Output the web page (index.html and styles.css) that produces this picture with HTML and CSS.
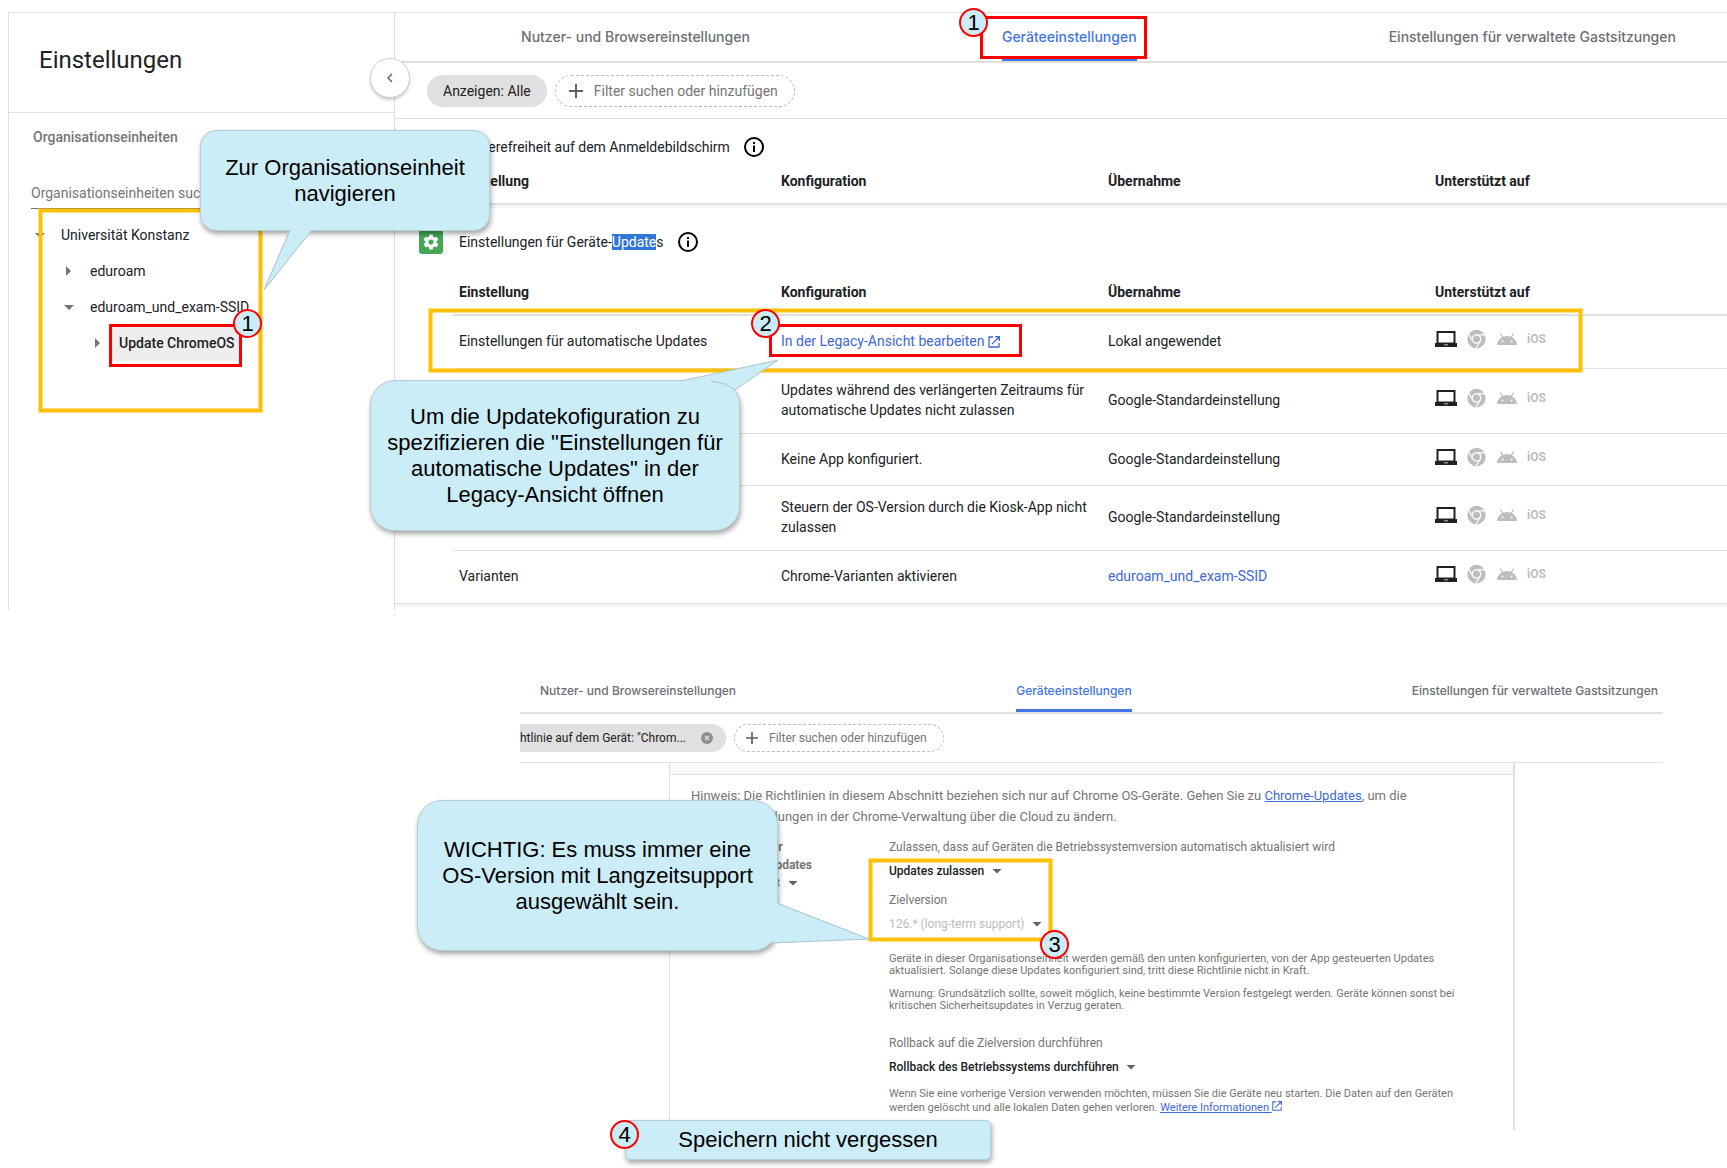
FILE: index.html
```html
<!DOCTYPE html>
<html lang="de">
<head>
<meta charset="utf-8">
<meta name="viewport" content="width=device-width, initial-scale=1">
<title>Einstellungen – Geräteeinstellungen</title>
<link rel="stylesheet" href="styles.css">
</head>
<body>
<svg class="sprite" aria-hidden="true">
  <symbol id="laptop" viewBox="0 0 22 16">
    <path fill="#202124" fill-rule="evenodd" d="M1.500 0h19v12H22v4H0v-4h1.500zM3.500 2v9.500h15V2z"/>
    <path fill="#8a8a8a" d="M9 13h4v1.500H9z"/>
  </symbol>
  <symbol id="chrome" viewBox="0 0 20 20">
    <circle cx="9.500" cy="10" r="9.200" fill="#bdbdbd"/>
    <path d="M9.500 5.800H18M5.800 12.100L1.600 4.900M13.200 12.100L9 19.300" stroke="#fff" stroke-width="1.200"/>
    <circle cx="9.500" cy="10" r="4.200" fill="#bdbdbd" stroke="#fff" stroke-width="1.200"/>
  </symbol>
  <symbol id="android" viewBox="0 0 20 12">
    <path fill="#bdbdbd" d="M0 12a10 9 0 0 1 20 0z"/>
    <path d="M3.300.500L6 4.600M16.700.500L14 4.600" stroke="#bdbdbd" stroke-width="1.300"/>
    <circle cx="5.500" cy="8.500" r="1" fill="#fff"/><circle cx="14.500" cy="8.500" r="1" fill="#fff"/>
  </symbol>
  <symbol id="info" viewBox="0 0 20 20">
    <circle cx="10" cy="10" r="9" fill="none" stroke="#000" stroke-width="2"/>
    <path fill="#000" d="M9 5h2v2H9zM9 8.500h2V15H9z"/>
  </symbol>
  <symbol id="open" viewBox="0 0 12 12">
    <path d="M5 1H1v10h10V7M7 .7h4.300V5M11 1L4 8" fill="none" stroke="currentColor" stroke-width="1.300"/>
  </symbol>
  <symbol id="plus" viewBox="0 0 14 14">
    <path d="M7 0v14M0 7h14" stroke="#5f6368" stroke-width="2"/>
  </symbol>
  <symbol id="gear" viewBox="0 0 24 24">
    <path fill="#fff" d="M19.430 12.980c.04-.32.07-.64.07-.98s-.03-.66-.07-.98l2.110-1.650c.19-.15.24-.42.12-.64l-2-3.460c-.12-.22-.39-.3-.61-.22l-2.490 1c-.52-.4-1.080-.73-1.690-.98l-.38-2.650C14.460 2.180 14.250 2 14 2h-4c-.25 0-.46.18-.49.42l-.38 2.650c-.61.25-1.170.59-1.690.98l-2.490-1c-.23-.09-.49 0-.61.22l-2 3.460c-.13.22-.07.49.12.64l2.110 1.650c-.04.32-.07.65-.07.98s.03.66.07.98l-2.110 1.650c-.19.15-.24.42-.12.64l2 3.460c.12.22.39.3.61.22l2.490-1c.52.4 1.080.73 1.690.98l.38 2.650c.03.24.24.42.49.42h4c.25 0 .46-.18.49-.42l.38-2.650c.61-.25 1.170-.59 1.690-.98l2.490 1c.23.09.49 0 .61-.22l2-3.460c.12-.22.07-.49-.12-.64zM12 15.500c-1.930 0-3.500-1.570-3.500-3.500s1.570-3.500 3.500-3.500 3.500 1.570 3.500 3.500-1.570 3.500-3.500 3.500z"/>
  </symbol>
</svg>

<section class="console">
  <aside class="sidebar">
    <h1 class="sidebar-title">Einstellungen</h1>
    <button class="collapse" aria-label="Seitenleiste einklappen">
      <svg width="6" height="10" viewBox="0 0 6 10"><path d="M5 1L1 5l4 4" fill="none" stroke="#5f6368" stroke-width="1.500"/></svg>
    </button>
    <h2 class="units-title">Organisationseinheiten</h2>
    <input class="unit-search" type="text" placeholder="Organisationseinheiten suchen" aria-label="Organisationseinheiten suchen">
    <ul class="tree">
      <li><button class="node level-1"><i class="arrow down"></i><span>Universität Konstanz</span></button></li>
      <li><button class="node level-2"><i class="arrow right"></i><span>eduroam</span></button></li>
      <li><button class="node level-2"><i class="arrow down"></i><span>eduroam_und_exam-SSID</span></button></li>
      <li><button class="node level-3 selected"><i class="arrow right"></i><span>Update ChromeOS</span></button></li>
    </ul>
  </aside>

  <main class="content">
    <nav class="tabs">
      <a href="#nutzer">Nutzer- und Browsereinstellungen</a>
      <a href="#geraete" class="active">Geräteeinstellungen</a>
      <a href="#gast">Einstellungen für verwaltete Gastsitzungen</a>
    </nav>
    <div class="toolbar">
      <button class="chip">Anzeigen: Alle</button>
      <label class="filter"><svg width="14" height="14"><use href="#plus"/></svg><input type="text" placeholder="Filter suchen oder hinzufügen" aria-label="Filter suchen oder hinzufügen"></label>
    </div>

    <section class="group first">
      <h3 class="group-title"><span>Barrierefreiheit auf dem Anmeldebildschirm</span><svg width="20" height="20"><use href="#info"/></svg></h3>
      <table class="settings">
        <colgroup><col class="c-name"><col class="c-value"><col class="c-value"><col></colgroup>
        <thead><tr><th>Einstellung</th><th>Konfiguration</th><th>Übernahme</th><th>Unterstützt auf</th></tr></thead>
      </table>
    </section>

    <section class="group updates">
      <h3 class="group-title"><i class="badge"><svg width="18" height="18"><use href="#gear"/></svg></i><span>Einstellungen für Geräte-<mark>Update</mark>s</span><svg width="20" height="20"><use href="#info"/></svg></h3>
      <table class="settings">
        <colgroup><col class="c-name"><col class="c-value"><col class="c-value"><col></colgroup>
        <thead><tr><th>Einstellung</th><th>Konfiguration</th><th>Übernahme</th><th>Unterstützt auf</th></tr></thead>
        <tbody>
          <tr>
            <td>Einstellungen für automatische Updates</td>
            <td><a href="#legacy">In der Legacy-Ansicht bearbeiten <svg class="open" width="12" height="12"><use href="#open"/></svg></a></td>
            <td>Lokal angewendet</td>
            <td><div class="platforms"><svg width="22" height="16"><use href="#laptop"/></svg><svg width="20" height="20"><use href="#chrome"/></svg><svg width="20" height="12"><use href="#android"/></svg><b>iOS</b></div></td>
          </tr>
          <tr>
            <td></td>
            <td>Updates während des verlängerten Zeitraums für automatische Updates nicht zulassen</td>
            <td>Google-Standardeinstellung</td>
            <td><div class="platforms"><svg width="22" height="16"><use href="#laptop"/></svg><svg width="20" height="20"><use href="#chrome"/></svg><svg width="20" height="12"><use href="#android"/></svg><b>iOS</b></div></td>
          </tr>
          <tr>
            <td></td>
            <td>Keine App konfiguriert.</td>
            <td>Google-Standardeinstellung</td>
            <td><div class="platforms"><svg width="22" height="16"><use href="#laptop"/></svg><svg width="20" height="20"><use href="#chrome"/></svg><svg width="20" height="12"><use href="#android"/></svg><b>iOS</b></div></td>
          </tr>
          <tr>
            <td></td>
            <td>Steuern der OS-Version durch die Kiosk-App nicht zulassen</td>
            <td>Google-Standardeinstellung</td>
            <td><div class="platforms"><svg width="22" height="16"><use href="#laptop"/></svg><svg width="20" height="20"><use href="#chrome"/></svg><svg width="20" height="12"><use href="#android"/></svg><b>iOS</b></div></td>
          </tr>
          <tr>
            <td>Varianten</td>
            <td>Chrome-Varianten aktivieren</td>
            <td><a href="#unit">eduroam_und_exam-SSID</a></td>
            <td><div class="platforms"><svg width="22" height="16"><use href="#laptop"/></svg><svg width="20" height="20"><use href="#chrome"/></svg><svg width="20" height="12"><use href="#android"/></svg><b>iOS</b></div></td>
          </tr>
        </tbody>
      </table>
    </section>
  </main>
</section>

<section class="legacy">
  <nav class="tabs compact">
    <a href="#nutzer">Nutzer- und Browsereinstellungen</a>
    <a href="#geraete" class="active">Geräteeinstellungen</a>
    <a href="#gast">Einstellungen für verwaltete Gastsitzungen</a>
  </nav>
  <div class="toolbar compact">
    <button class="chip">htlinie auf dem Gerät: "Chrom...
      <svg width="12" height="12" viewBox="0 0 12 12"><circle cx="6" cy="6" r="6" fill="#8f8f8f"/><path d="M4 4l4 4M8 4L4 8" stroke="#e0e0e0" stroke-width="1.400"/></svg></button>
    <label class="filter"><svg width="12" height="12"><use href="#plus"/></svg><input type="text" placeholder="Filter suchen oder hinzufügen" aria-label="Filter suchen oder hinzufügen"></label>
  </div>
  <div class="card">
    <div class="card-strip"></div>
    <p class="note">Hinweis: Die Richtlinien in diesem Abschnitt beziehen sich nur auf Chrome OS-Geräte. Gehen Sie zu <a href="#updates">Chrome-Updates</a>, um die<br>Update-Einstellungen in der Chrome-Verwaltung über die Cloud zu ändern.</p>
    <div class="policy">
      <div class="policy-name">
        <strong>Einstellungen für<br>automatische Updates</strong>
        <label class="picker plain"><select aria-label="Übernahme"><option>Lokal angewendet</option></select></label>
      </div>
      <div class="policy-fields">
        <div class="field">
          <label for="allow">Zulassen, dass auf Geräten die Betriebssystemversion automatisch aktualisiert wird</label>
          <div class="picker"><select id="allow"><option>Updates zulassen</option></select></div>
        </div>
        <div class="field">
          <label for="target">Zielversion</label>
          <div class="picker"><select id="target" disabled><option>126.* (long-term support)</option></select></div>
        </div>
        <div class="hints">
          <p>Geräte in dieser Organisationseinheit werden gemäß den unten konfigurierten, von der App gesteuerten Updates<br>aktualisiert. Solange diese Updates konfiguriert sind, tritt diese Richtlinie nicht in Kraft.</p>
          <p>Warnung: Grundsätzlich sollte, soweit möglich, keine bestimmte Version festgelegt werden. Geräte können sonst bei<br>kritischen Sicherheitsupdates in Verzug geraten.</p>
        </div>
        <div class="field">
          <label for="rollback">Rollback auf die Zielversion durchführen</label>
          <div class="picker"><select id="rollback"><option>Rollback des Betriebssystems durchführen</option></select></div>
        </div>
        <p class="rollback-hint">Wenn Sie eine vorherige Version verwenden möchten, müssen Sie die Geräte neu starten. Die Daten auf den Geräten<br>werden gelöscht und alle lokalen Daten gehen verloren. <a href="#info">Weitere Informationen <svg width="10" height="10"><use href="#open"/></svg></a></p>
      </div>
    </div>
  </div>
</section>

<div class="annotations">
  <div class="frame frame-units"></div>
  <div class="frame frame-row"></div>
  <div class="frame frame-version"></div>
  <div class="box box-tab"></div>
  <div class="box box-unit"></div>
  <div class="box box-link"></div>

  <div class="callout callout-units">Zur Organisationseinheit<br>navigieren</div>
  <div class="callout round callout-legacy">Um die Updatekofiguration zu<br>spezifizieren die "Einstellungen für<br>automatische Updates" in der<br>Legacy-Ansicht öffnen</div>
  <div class="callout round callout-version">WICHTIG: Es muss immer eine<br>OS-Version mit Langzeitsupport<br>ausgewählt sein.</div>
  <div class="callout flat callout-save">Speichern nicht vergessen</div>

  <svg class="tail tail-units" width="50" height="62" viewBox="0 0 50 62"><path d="M27 0L1 60L49 0"/></svg>
  <svg class="tail tail-legacy" width="98" height="34" viewBox="0 0 98 34"><path d="M0 22L97 1L54 31L44 25L30 22"/></svg>
  <svg class="tail tail-version" width="100" height="42" viewBox="0 0 100 42"><path d="M6 0L98 36L0 40"/></svg>

  <span class="step step-tab">1</span>
  <span class="step step-unit">1</span>
  <span class="step step-link">2</span>
  <span class="step step-version">3</span>
  <span class="step step-save">4</span>
</div>
</body>
</html>
```

FILE: styles.css
```css
* { box-sizing: border-box; }

body {
  position: relative;
  margin: 0;
  padding: 12px 0 38px 8px;
  background: #fff;
  color: #202124;
  font: 14px/20px Roboto, "Liberation Sans", sans-serif;
}

h1, h2, h3, p, ul { margin: 0; padding: 0; font-weight: 400; }
ul { list-style: none; }
svg { display: block; flex: none; }
.sprite { position: absolute; width: 0; height: 0; }
button, input, select { margin: 0; padding: 0; border: 0; background: none; color: inherit; font: inherit; outline: 0; }
a { color: #4067d8; text-decoration: none; }

/* Admin console */
.console {
  display: flex;
  border-top: 1px solid #dfdfdf;
  border-left: 1px solid #dfdfdf;
}

.sidebar {
  position: relative;
  flex: none;
  width: 386px;
  border-right: 1px solid #dfdfdf;
}
.sidebar-title {
  height: 100px;
  padding: 31px 0 0 30px;
  border-bottom: 1px solid #dfdfdf;
  font-size: 24px;
  line-height: 32px;
}
.collapse {
  position: absolute;
  top: 45px;
  right: -16px;
  display: grid;
  place-items: center;
  width: 40px;
  height: 40px;
  border: 1px solid #d0d0d0;
  border-radius: 50%;
  background: #fff;
  box-shadow: 0 2px 3px rgba(0, 0, 0, .2);
}
.units-title {
  padding: 14px 0 0 24px;
  color: #757575;
  font-size: 14px;
  font-weight: 500;
}
.unit-search {
  display: block;
  width: 340px;
  height: 32px;
  margin: 30px 0 0 22px;
  border-bottom: 1px solid #757575;
}
input::placeholder { color: #757575; opacity: 1; }

.tree { padding-top: 8px; }
.node { display: flex; align-items: center; height: 36px; }
.node span { display: flex; align-items: center; height: 36px; }
.level-1 { padding-left: 26px; }
.level-2 { padding-left: 55px; }
.level-3 { padding-left: 84px; }
.arrow { width: 10px; height: 10px; margin-right: 16px; background: #757575; }
.arrow.down { clip-path: polygon(0 30%, 100% 30%, 50% 80%); }
.arrow.right { clip-path: polygon(20% 0, 70% 50%, 20% 100%); }
.selected { font-weight: 500; }
.selected .arrow { margin-right: 8px; }
.selected span { width: 130px; padding-left: 8px; background: #eee; }

.content { flex: 1; min-width: 0; overflow: hidden; padding-bottom: 3px; }

.tabs {
  display: flex;
  justify-content: space-around;
  height: 50px;
  margin-right: -75px;
  border-bottom: 2px solid #e0e0e0;
  font: 500 14px/20px Inter, "Open Sans", sans-serif;
}
.tabs a { height: 48px; padding-top: 14px; color: #6b6e72; white-space: nowrap; }
.tabs .active { border-bottom: 3px solid #4175e8; color: #4175e8; }

.toolbar {
  display: flex;
  align-items: center;
  gap: 8px;
  height: 56px;
  padding-left: 32px;
  border-bottom: 1px solid #e0e0e0;
}
.chip {
  display: flex;
  align-items: center;
  height: 32px;
  padding: 0 16px;
  border-radius: 16px;
  background: #e0e0e0;
}
.filter {
  display: flex;
  align-items: center;
  gap: 11px;
  width: 240px;
  height: 32px;
  padding-left: 13px;
  border: 1px dashed #bdbdbd;
  border-radius: 16px;
}
.filter input { width: 190px; }

.group { border-bottom: 1px solid #e0e0e0; box-shadow: 0 3px 0 #f5f5f5; margin-bottom: 3px; }
.group.first { height: 86px; border-bottom-width: 2px; }
.group-title {
  display: flex;
  align-items: center;
  padding-left: 64px;
  font-size: 14px;
}
.first .group-title { padding-top: 18px; }
.updates .group-title { padding: 22px 0 0 24px; }
.group-title span + svg { margin-left: 14px; }
.badge {
  display: grid;
  place-items: center;
  width: 24px;
  height: 24px;
  margin-right: 16px;
  border-radius: 3px;
  background: #43a756;
}
mark { background: #3076d8; color: #fff; }

.settings {
  width: calc(100% - 58px);
  margin-left: 58px;
  border-collapse: separate;
  border-spacing: 0;
  table-layout: fixed;
}
.c-name { width: 322px; }
.c-value { width: 327px; }
th, td { padding: 0 12px 0 6px; text-align: left; vertical-align: middle; }
th { font-weight: 700; height: 48px; }
.first th { height: 48px; }
.updates th { height: 62px; padding-top: 15px; border-bottom: 2px solid #e0e0e0; }
td { height: 52px; padding-top: 5px; padding-bottom: 7px; }
tr:nth-child(even) td { height: 65px; }
tr:last-child td { height: 53px; }
tr + tr td { border-top: 1px solid #e0e0e0; }
.open { display: inline-block; vertical-align: -2px; }
.platforms { display: flex; align-items: center; gap: 10px; height: 20px; margin-bottom: 4px; }
.platforms b { color: #bdbdbd; font-size: 12px; }

/* Legacy policy view */
.legacy { margin: 60px 64px 0 512px; }
.tabs.compact {
  justify-content: space-between;
  height: 44px;
  margin-right: 0;
  padding: 0 5px 0 20px;
  font-size: 12px;
}
.compact a { height: 42px; padding-top: 11px; }
.toolbar.compact { height: 49px; padding-left: 0; font-size: 12px; }
.compact .chip { gap: 15px; width: 206px; height: 28px; padding: 0; border-radius: 0 14px 14px 0; white-space: nowrap; }
.compact .filter { width: 210px; height: 28px; padding-left: 11px; }
.compact .filter input { width: 170px; }

.card {
  margin: 0 148px 0 149px;
  border: solid #e0e0e0;
  border-width: 0 2px 0 1px;
  color: #757575;
  font-size: 12px;
  line-height: 18px;
}
.card-strip { height: 12px; border-bottom: 1px solid #e0e0e0; background: #fafafa; }
.note { padding: 10px 0 11px 21px; font-size: 13px; line-height: 21px; white-space: nowrap; }
.card a { color: #4067d8; text-decoration: underline; }
.policy { display: grid; grid-template-columns: 198px 1fr; padding: 0 0 15px 21px; }
.policy-name strong { display: block; font-weight: 700; }
.policy-fields { white-space: nowrap; }
.field { margin-bottom: 11px; }
.field label { display: block; margin-bottom: 6px; }
.picker { display: flex; align-items: center; gap: 7px; color: #202124; }
.picker.plain { color: #757575; font-size: 11px; }
.picker::after { content: ""; width: 10px; height: 5px; background: #616161; clip-path: polygon(0 0, 100% 0, 50% 100%); }
select { appearance: none; height: 18px; line-height: 18px; font-weight: 500; }
.plain select { font-weight: 400; }
select:disabled { color: #bdbdbd; opacity: 1; font-weight: 400; }
.hints { display: grid; gap: 11px; padding: 9px 0 22px; font-size: 11px; line-height: 12px; }
.rollback-hint { font-size: 11px; line-height: 14px; }
.rollback-hint svg { display: inline-block; }

/* Guide markers laid over both views */
.annotations { position: absolute; inset: 0; color: #000; font: 22px/26px "Liberation Sans", Arial, sans-serif; pointer-events: none; }
.annotations > * { position: absolute; }

.frame {
  border: 3px solid #ffc000;
  box-shadow: 0 0 0 1px rgba(255, 192, 0, .5), inset 0 0 0 1px rgba(255, 192, 0, .5);
}
.frame-units { left: 39px; top: 209px; width: 223px; height: 203px; }
.frame-row { left: 429px; top: 309px; width: 1153px; height: 63px; }
.frame-version { left: 869px; top: 859px; width: 183px; height: 82px; }

.box { border: 3px solid #f00; }
.box-tab { left: 980px; top: 16px; width: 167px; height: 43px; }
.box-unit { left: 109px; top: 324px; width: 133px; height: 43px; }
.box-link { left: 769px; top: 324px; width: 253px; height: 33px; }

.callout {
  display: flex;
  align-items: center;
  justify-content: center;
  border: 1px solid #b4ced5;
  border-radius: 16px;
  background: #cbedf8;
  box-shadow: 1px 3px 5px rgba(0, 0, 0, .35);
  text-align: center;
  white-space: nowrap;
}
.callout.round { border-radius: 25px; }
.callout.flat { border-radius: 5px; }
.callout-units { left: 200px; top: 130px; width: 290px; height: 101px; }
.callout-legacy { left: 370px; top: 380px; width: 370px; height: 151px; }
.callout-version { left: 417px; top: 800px; width: 361px; height: 151px; }
.callout-save { left: 625px; top: 1120px; width: 366px; height: 40px; }

.tail path { fill: #cbedf8; stroke: #a9c3ca; stroke-width: 1; }
.tail-units { left: 263px; top: 230px; }
.tail-legacy { left: 681px; top: 359px; }
.tail-version { left: 771px; top: 903px; }

.step {
  display: grid;
  place-items: center;
  width: 29px;
  height: 29px;
  border: 2px solid #f00;
  border-radius: 50%;
  background: #cbedf8;
}
.step-tab { left: 959px; top: 8px; }
.step-unit { left: 233px; top: 309px; }
.step-link { left: 751px; top: 309px; }
.step-version { left: 1040px; top: 930px; }
.step-save { left: 610px; top: 1120px; }
```
